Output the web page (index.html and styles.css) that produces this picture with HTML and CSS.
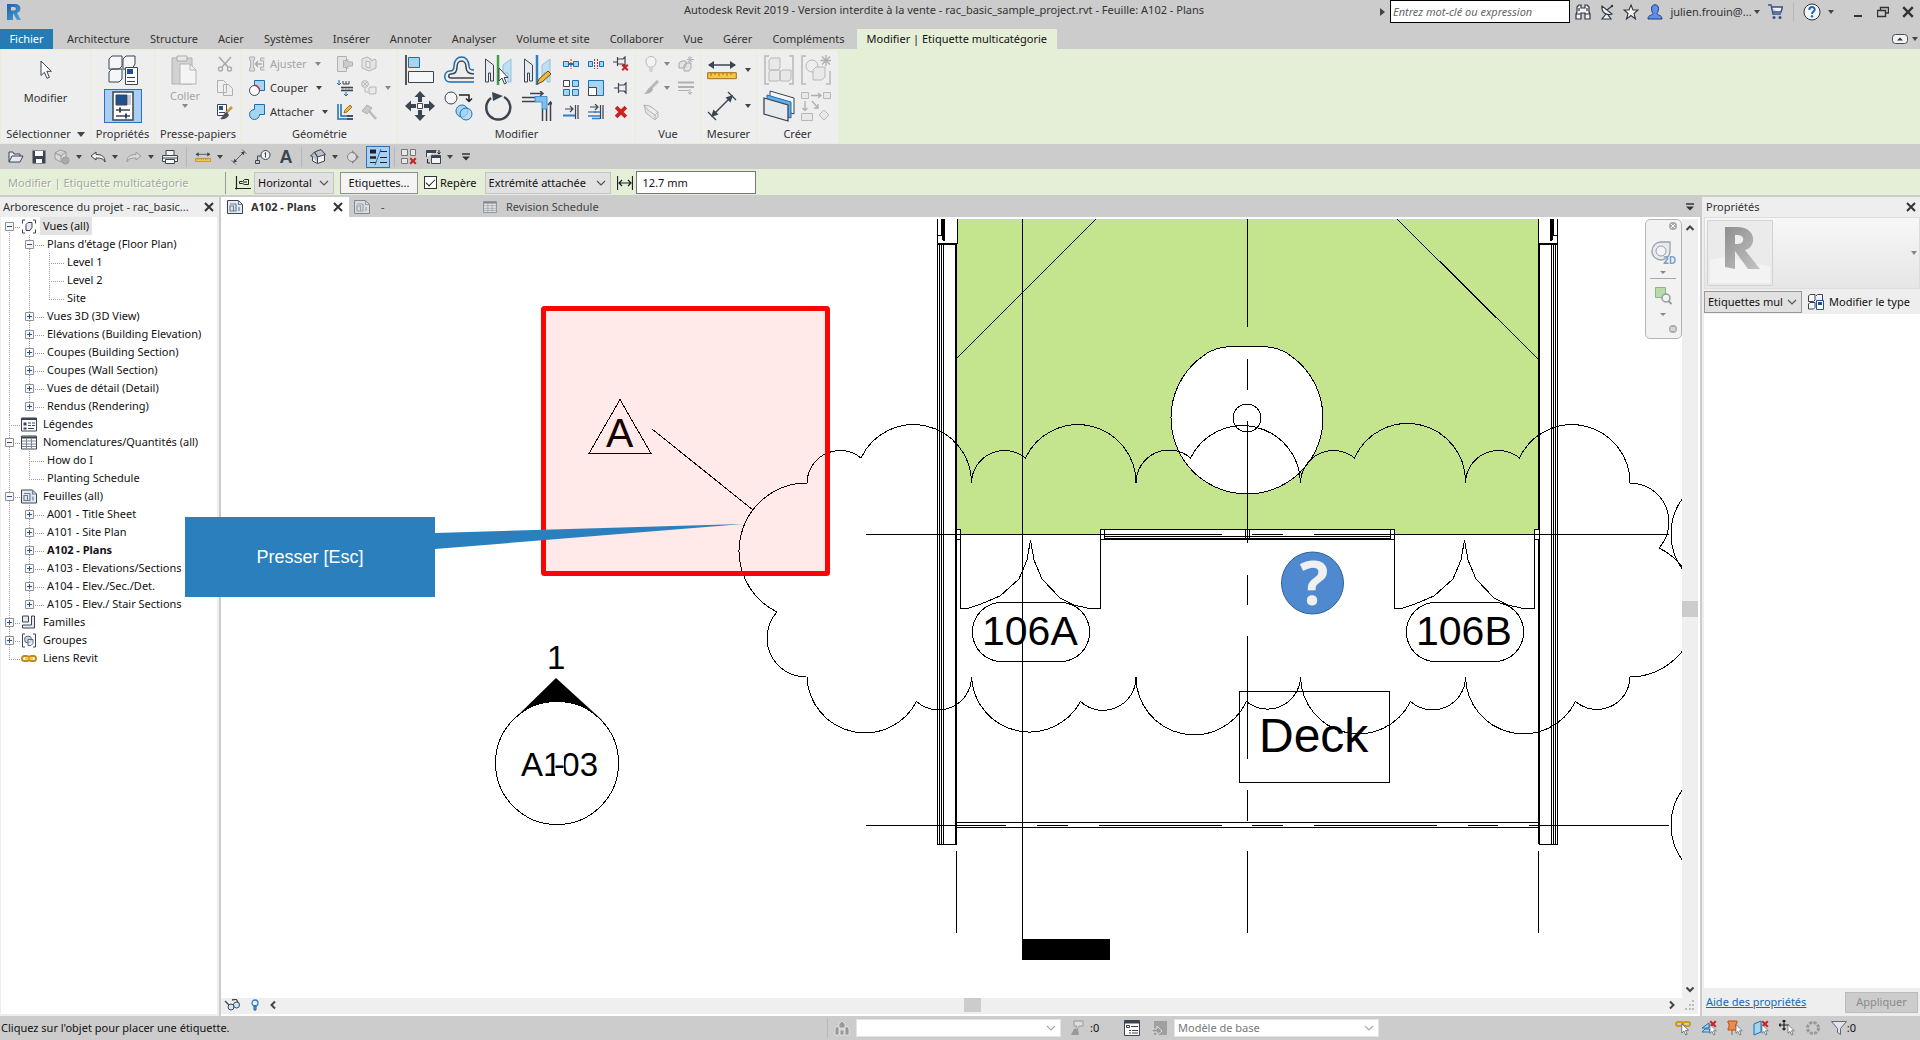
FILE: index.html
```html
<!DOCTYPE html>
<html lang="fr">
<head>
<meta charset="utf-8">
<title>Autodesk Revit 2019 - A102 - Plans</title>
<link rel="stylesheet" href="styles.css">
</head>
<body>
<svg class="defs" aria-hidden="true">
  <defs>
    <linearGradient id="rblue" x1="0" y1="0" x2="1" y2="1"><stop offset="0" stop-color="#1c5fa8"/><stop offset="1" stop-color="#4fa3d8"/></linearGradient>
    <linearGradient id="rgrey" x1="0" y1="0" x2="1" y2="1"><stop offset="0" stop-color="#8f8f8f"/><stop offset="1" stop-color="#c4c4c4"/></linearGradient>
    <symbol id="sheet" viewBox="0 0 16 14"><path d="M.5 .5h11l4 4v9H.5z" fill="#e6ebf2" stroke="#3b4450"/><path d="M11.500 .5v4h4M3 4h6M3 11V6h3.500v5zM9 4v7H6.500M12 7v4" fill="none" stroke="#6b7c94" stroke-width="1.200"/></symbol>
    <symbol id="table" viewBox="0 0 16 14"><path d="M.5 .5h15v13H.5z" fill="#fff" stroke="#3b4450"/><path d="M1 2h14" stroke="#3b4450" stroke-width="2"/><path d="M1 5.500h14M1 8.500h14M1 11h14M5.500 3v10M10.500 3v10" stroke="#7b8694"/></symbol>
    <symbol id="plus" viewBox="0 0 9 9"><path d="M.5 .5h8v8h-8z" fill="#f8f8f8" stroke="#919191"/><path d="M2 4.500h5M4.500 2v5" stroke="#2c4f8f"/></symbol>
    <symbol id="minus" viewBox="0 0 9 9"><path d="M.5 .5h8v8h-8z" fill="#f8f8f8" stroke="#919191"/><path d="M2 4.500h5" stroke="#2c4f8f"/></symbol>
    <symbol id="cursor" viewBox="0 0 12 20"><path d="M1 1v14.500l3.400-3.200 2.600 6 2.400-1-2.600-6h4.600z" fill="#fff" stroke="#3b4450"/></symbol>
    <symbol id="close" viewBox="0 0 10 10"><path d="M1 1l8 8M9 1L1 9" stroke="#333" stroke-width="2"/></symbol>
    <symbol id="chev" viewBox="0 0 10 6"><path d="M1 1l4 4 4-4" fill="none" stroke="currentColor" stroke-width="1.200"/></symbol>
    <symbol id="ruler" viewBox="0 0 30 20"><path d="M2 5h26" stroke="#3b4450" stroke-width="1.500"/><path d="M1 5l6-4v8zM29 5l-6-4v8z" fill="#3b4450"/><path d="M.7 12.700h28.600v6H.7z" fill="#f3c64c" stroke="#a86c11"/><path d="M4 13v3M8 13v2M12 13v3M16 13v2M20 13v3M24 13v2" stroke="#a86c11"/></symbol>
    <symbol id="dim" viewBox="0 0 30 30"><path d="M6 24L24 6" stroke="#3b4450" stroke-width="1.500"/><path d="M4 26l2.500-7.500 5 5zM26 4l-2.500 7.500-5-5z" fill="#3b4450"/><path d="M1 21l8 8M21 1l8 8" stroke="#3b4450" stroke-width="1.300"/></symbol>
    <symbol id="redx" viewBox="0 0 10 10"><path d="M1.500 1.500l7 7M8.500 1.500l-7 7" stroke="#c22" stroke-width="2.600"/></symbol>
    <symbol id="props" viewBox="0 0 22 30"><path d="M1 1h20v28H1z" fill="#fff" stroke="#3b4450" stroke-width="1.500"/><path d="M4 4h11v10H4z" fill="#1f528c" stroke="#3b4450"/><path d="M16 4h3v10h-3z" fill="#c9ccd2"/><path d="M4 19h14M4 25h14" stroke="#3b4450" stroke-width="1.500"/><path d="M8 16.500v5M14 22.500v5" stroke="#3b4450" stroke-width="2"/></symbol>
  </defs>
</svg>

<header class="titlebar">
  <svg class="logo" viewBox="0 0 16 18"><path d="M1 1h8c7 0 7 8 2 9l4 7h-4L7 10v7H1z" fill="url(#rblue)"/><path d="M5 4h3c2.500 0 2.500 3.500 0 3.500H5z" fill="#ccc"/></svg>
  <h1>Autodesk Revit 2019 - Version interdite à la vente - rac_basic_sample_project.rvt - Feuille: A102 - Plans</h1>
  <div class="tools">
    <span class="tri-right"></span>
    <input class="search" type="text" aria-label="Recherche" placeholder="Entrez mot-clé ou expression">
    <button class="tb" aria-label="Rechercher"><svg width="16" height="16" viewBox="0 0 16 16"><path d="M2 3l2-2h2v3h4V1h2l2 2v5l1 2v5h-5V9H6v6H1v-5l1-2zM1 10h5M10 10h5M4 4v3M12 4v3" fill="#f3f3f3" stroke="#2f3742" stroke-width="1.200"/></svg></button>
    <button class="tb" aria-label="Centre de communication"><svg width="16" height="16" viewBox="0 0 16 16"><path d="M3 2c-1 6 4 10 10 8zM8 6l5-4M7 10l-4 5h9l-3-4" fill="#f3f3f3" stroke="#2f3742" stroke-width="1.200"/><circle cx="13" cy="2" r="1.200" fill="#2f3742"/></svg></button>
    <button class="tb" aria-label="Favoris"><svg width="16" height="16" viewBox="0 0 16 16"><path d="M8 1l2 5h5l-4 3.500 1.500 5.500L8 11.500 3.500 15 5 9.500 1 6h5z" fill="#f3f3f3" stroke="#2f3742" stroke-width="1.100"/></svg></button>
    <button class="tb" aria-label="Compte"><svg width="16" height="16" viewBox="0 0 16 16"><path d="M4.500 4.500c0-5 7-5 7 0 0 3-1 4-1.500 5 0 2 5 1 5 5.500H1c0-4.500 5-3.500 5-5.500-.5-1-1.500-2-1.500-5z" fill="#5b8ff0" stroke="#253a66"/></svg></button>
    <button class="user">julien.frouin@...<span class="caret"></span></button>
    <button class="tb" aria-label="Boutique"><svg width="16" height="16" viewBox="0 0 16 16"><path d="M1 1h3l2 9h8M4.500 3h11L14 8H6" fill="#eef3fb" stroke="#33508a" stroke-width="1.400"/><circle cx="7" cy="13.500" r="1.500" fill="#33508a"/><circle cx="13" cy="13.500" r="1.500" fill="#33508a"/></svg></button>
    <span class="vsep"></span>
    <button class="tb" aria-label="Aide"><svg width="18" height="18" viewBox="0 0 18 18"><circle cx="9" cy="9" r="8" fill="#f4f8fd" stroke="#2f3742"/><path d="M6.300 7c0-4 5.600-3.600 5.400-.4C11.600 8.500 9 8.600 9 11" fill="none" stroke="#2166b8" stroke-width="2"/><circle cx="9" cy="13.300" r="1.200" fill="#2166b8"/></svg></button>
    <span class="caret"></span>
    <button class="win" aria-label="Réduire"><svg width="12" height="12" viewBox="0 0 12 12"><path d="M2 10h8" stroke="#333" stroke-width="2"/></svg></button>
    <button class="win" aria-label="Restaurer"><svg width="12" height="12" viewBox="0 0 12 12"><path d="M3.500 4V1.500h8V7H9M.5 4.500h8v6h-8z" fill="none" stroke="#333" stroke-width="1.400"/></svg></button>
    <button class="win" aria-label="Fermer"><svg width="12" height="12"><use href="#close"/></svg></button>
  </div>
</header>

<nav class="tabs">
  <a href="#" class="file">Fichier</a>
  <a href="#">Architecture</a><a href="#">Structure</a><a href="#">Acier</a><a href="#">Systèmes</a><a href="#">Insérer</a><a href="#">Annoter</a><a href="#">Analyser</a><a href="#">Volume et site</a><a href="#">Collaborer</a><a href="#">Vue</a><a href="#">Gérer</a><a href="#">Compléments</a>
  <a href="#" class="ctx">Modifier | Etiquette multicatégorie</a>
  <button class="collapse" aria-label="Réduire le ruban"><svg width="16" height="10" viewBox="0 0 16 10"><rect x=".5" y=".5" width="15" height="9" rx="3" fill="#f4f4f4" stroke="#444c57"/><path d="M5 6.500h6L8 3.500z" fill="#333"/></svg><span class="caret"></span></button>
</nav>

<section class="ribbon">
  <div class="panel">
    <div class="body one">
      <button class="big"><svg width="12" height="20"><use href="#cursor"/></svg><span>Modifier</span></button>
    </div>
    <h2>Sélectionner <span class="caret wide"></span></h2>
  </div>
  <div class="panel">
    <div class="body lg c1">
      <button aria-label="Propriétés du type"><svg width="30" height="30" viewBox="0 0 30 30"><path d="M1 4l3-3h10v10l-3 3H1zM15 4l3-3h9v8l-3 5h-9zM1 17l3-3h10v10l-3 3H1z" fill="#f5f6f8" stroke="#3b4450"/><path d="M17.500 12.500h12v17h-12z" fill="#fff" stroke="#3b4450"/><path d="M19 14h6v5h-6z" fill="#1f528c"/><path d="M19 22.500h8M19 26.500h8" stroke="#3b4450"/></svg></button>
      <button class="on" aria-label="Palette des propriétés"><svg width="22" height="30"><use href="#props"/></svg></button>
    </div>
    <h2>Propriétés</h2>
  </div>
  <div class="panel">
    <div class="body clip">
      <button class="big off"><svg width="28" height="30" viewBox="0 0 28 30"><path d="M1 3h20v26H1z" fill="#d2d2d2" stroke="#b0b0b0"/><path d="M6 1h10v5H6z" fill="#e8e8e8" stroke="#aaa"/><path d="M9 9h10l6 6v14H9z" fill="#f4f4f4" stroke="#b5b5b5"/><path d="M19 9v6h6" fill="none" stroke="#b5b5b5"/></svg><span>Coller</span><span class="caret"></span></button>
      <div class="sm">
        <button aria-label="Couper"><svg width="16" height="16" viewBox="0 0 16 16"><path d="M2 1l9 10M14 1L5 11" stroke="#aaa" stroke-width="1.600"/><circle cx="3.500" cy="13" r="2" fill="none" stroke="#aaa" stroke-width="1.400"/><circle cx="12.500" cy="13" r="2" fill="none" stroke="#aaa" stroke-width="1.400"/></svg></button>
        <button aria-label="Copier"><svg width="16" height="16" viewBox="0 0 16 16"><path d="M.5 .5h6l3 3v9h-9zM6.500 4.500h5l4 4v7h-9z" fill="#efefef" stroke="#b0b0b0"/></svg></button>
        <button aria-label="Copier les propriétés"><svg width="16" height="16" viewBox="0 0 16 16"><path d="M.5 .5h9v11h-9z" fill="#fff" stroke="#3b4450"/><path d="M2 2h4v4H2z" fill="#1f528c"/><path d="M2 8.500h6" stroke="#3b4450"/><path d="M15 3L9 9" stroke="#c99a3c" stroke-width="2.500"/><path d="M10 8l2 3c-2 4-6 5-9 4 3-2 3-6 7-7z" fill="#4a525e"/></svg></button>
      </div>
    </div>
    <h2>Presse-papiers</h2>
  </div>
  <div class="panel">
    <div class="body geo">
      <div class="sm left">
        <button class="off"><svg width="16" height="16" viewBox="0 0 16 16"><path d="M.5 1h5v3h-1v8h1v3h-5v-3h1V4h-1zM15.500 2h-4v3h3v6h-3v3h4" fill="#ddd" stroke="#b0b0b0"/><path d="M13 8H7m2-3L6.500 8 9 11" fill="none" stroke="#a5a5a5" stroke-width="1.300"/></svg>Ajuster<span class="caret"></span></button>
        <button><svg width="16" height="16" viewBox="0 0 16 16"><path d="M5.500 .5h10v10h-10z" fill="#a6d5ef" stroke="#1b6fb5"/><circle cx="5.500" cy="10.500" r="5" fill="#fff" stroke="#3b4450"/><path d="M5 5.500a5 5 0 0 1 5.500 5" fill="none" stroke="#c22" stroke-width="1.300"/></svg>Couper<span class="caret"></span></button>
        <button><svg width="16" height="16" viewBox="0 0 16 16"><path d="M5.500 .5h10v10h-5a5 5 0 1 1-5-5z" fill="#a6d5ef" stroke="#1b6fb5"/></svg>Attacher<span class="caret"></span></button>
      </div>
      <div class="sm">
        <button aria-label="Ajuster face"><svg width="16" height="16" viewBox="0 0 16 16"><path d="M.5 .5h9v4h-3v7h3v4h-9z" fill="#e4e4e4" stroke="#b0b0b0"/><path d="M15.500 6v4H11v2.500L6 8l5-4.500V6z" fill="#d0d0d0" stroke="#b0b0b0"/></svg></button>
        <button aria-label="Joints de poutre"><svg width="16" height="16" viewBox="0 0 16 16"><path d="M2 0v5M0 3l2 2 2-2M9 16v-4M7 14l2 2 2-2" fill="none" stroke="#1b6fb5"/><path d="M6 1v3h6V1M9 1v3" fill="none" stroke="#3b4450"/><path d="M4 7.500h12M4 10.500h12" stroke="#3b4450" stroke-width="1.300"/><path d="M5 9h11" stroke="#888" stroke-dasharray="2 1"/></svg></button>
        <button aria-label="Joints de mur"><svg width="16" height="16" viewBox="0 0 16 16"><path d="M1 0v15h15M4 0v12h12" fill="none" stroke="#1b6fb5" stroke-width="1.500"/><path d="M10 15h6M10 12h6" stroke="#3b4450" stroke-width="1.500"/><path d="M7 9l1-3 5-5 2 2-5 5z" fill="#f0b93a" stroke="#8b5a12" stroke-width=".8"/></svg></button>
      </div>
      <div class="sm left">
        <button aria-label="Scinder face"><svg width="16" height="16" viewBox="0 0 16 16"><path d="M1 3l5-2 4 2v2l4-2 1 1v8l-7 3-7-3zM5 5v6l4 1V6z" fill="#e4e4e4" stroke="#b5b5b5"/></svg></button>
        <button aria-label="Peindre"><svg width="16" height="16" viewBox="0 0 16 16"><circle cx="4" cy="4" r="3.400" fill="#e8e8e8" stroke="#b5b5b5"/><path d="M2 2l4 4M6 2L2 6M4 8v4h3" fill="none" stroke="#b5b5b5"/><path d="M8 8l1-1h6v6l-1 1H8z" fill="#e8e8e8" stroke="#b5b5b5"/></svg><span class="caret soft"></span></button>
        <button aria-label="Démolir"><svg width="16" height="16" viewBox="0 0 16 16"><path d="M1 7l5-6 5 3-5 6z" fill="#c9c9c9" stroke="#b0b0b0"/><path d="M8 7l7 8" stroke="#bbb" stroke-width="2.500"/></svg></button>
      </div>
    </div>
    <h2>Géométrie</h2>
  </div>
  <div class="panel">
    <div class="body mod">
      <div class="lg c4">
        <button aria-label="Aligner"><svg width="30" height="30" viewBox="0 0 30 30"><path d="M1 0v30" stroke="#222" stroke-width="1.500"/><path d="M3.500 2.500h11v10h-11z" fill="#a6d5ef" stroke="#1b6fb5"/><path d="M3.500 16.500h25v11h-25z" fill="#f5f6f8" stroke="#3b4450"/></svg></button>
        <button aria-label="Décaler"><svg width="30" height="30" viewBox="0 0 30 30"><path d="M30 27H6c-7 0-7-11 0-11 3 0 4-2 4-5 0-12 15-12 15 0 0 3 1 4 5 4" fill="none" stroke="#1b6fb5" stroke-width="1.500"/><path d="M30 23H7c-3 0-3-4 0-4 4 0 6-3 6-7 0-8 9-8 9 0 0 4 2 7 8 7" fill="none" stroke="#3b4450" stroke-width="1.500"/></svg></button>
        <button aria-label="Symétrie - Choisir l'axe"><svg width="28" height="30" viewBox="0 0 28 30"><path d="M1.500 4l8 6v16h-3V18h-2v9h-3z" fill="#e6e9ee" stroke="#3b4450"/><path d="M27 4l-8 6v16h2V18h3v9h3z" fill="#bfe0f2" stroke="#8fc0de"/><path d="M14 0v30" stroke="#43a047" stroke-width="2.500"/><path d="M15 13v13l3-3 2.500 6 2-1-2.500-5.500h4z" fill="#fff" stroke="#3b4450"/></svg></button>
        <button aria-label="Symétrie - Dessiner l'axe"><svg width="28" height="30" viewBox="0 0 28 30"><path d="M1.500 4l8 6v16h-3V18h-2v9h-3z" fill="#e6e9ee" stroke="#3b4450"/><path d="M27 4l-8 6v16h2V18h3v9h3z" fill="#bfe0f2" stroke="#8fc0de"/><path d="M14 0v30" stroke="#2b7fd0" stroke-width="2.500"/><path d="M14 29l2-5 9-8 3 3-9 8z" fill="#f0b93a" stroke="#6d4a12"/></svg></button>
        <button aria-label="Déplacer"><svg width="30" height="30" viewBox="0 0 30 30"><path d="M15 0l5.500 6H17v5h-4V6H9.500zM15 30l5.500-6H17v-5h-4v5H9.500zM0 15l6-5.500V13h5v4H6v3.500zM30 15l-6-5.500V13h-5v4h5v3.500z" fill="#3b4450"/><path d="M12.500 12.500h5v5h-5z" fill="#fff" stroke="#3b4450"/></svg></button>
        <button aria-label="Copier"><svg width="30" height="30" viewBox="0 0 30 30"><circle cx="7" cy="7" r="6" fill="#f5f6f8" stroke="#3b4450"/><path d="M15 4h10v6M22 7.500l3 3 3-3" fill="none" stroke="#222" stroke-width="1.500"/><circle cx="18" cy="20" r="6" fill="#a6d5ef" stroke="#1b6fb5"/><circle cx="22" cy="23" r="6" fill="#a6d5ef" fill-opacity=".7" stroke="#1b6fb5"/></svg></button>
        <button aria-label="Rotation"><svg width="28" height="30" viewBox="0 0 28 30"><path d="M7 7a12 12 0 1 0 13-1" fill="none" stroke="#3b4450" stroke-width="2.500"/><path d="M8 1l11 4-10 5z" fill="#3b4450"/></svg></button>
        <button aria-label="Ajuster/Prolonger"><svg width="30" height="30" viewBox="0 0 30 30"><path d="M8 2.500h12M18 0l3 2.500L18 5M28.500 30V12M26 14l2.500-3 2.500 3M0 6.500h13M0 10.500h13M20.500 30V17M24.500 30V17" fill="none" stroke="#3b4450" stroke-width="1.500"/><path d="M13 5.500h12V18h-5v-7h-7z" fill="#7fc0ea" stroke="#2b7fd0" stroke-width=".8"/></svg></button>
      </div>
      <div class="sm c3">
        <button aria-label="Scinder"><svg width="16" height="16" viewBox="0 0 16 16"><path d="M.5 5.500h5v5h-5zM10.500 5.500h5v5h-5z" fill="#a6d5ef" stroke="#1b6fb5"/><path d="M5 8h6" stroke="#1b6fb5" stroke-width="2"/><path d="M8 3v10" stroke="#c22" stroke-dasharray="2 1"/></svg></button>
        <button aria-label="Scinder avec écart"><svg width="16" height="16" viewBox="0 0 16 16"><path d="M.5 5.500h4v5h-4zM11.500 5.500h4v5h-4z" fill="#a6d5ef" stroke="#1b6fb5"/><path d="M6.500 3v10M9.500 3v10" stroke="#c22" stroke-dasharray="2 1"/></svg></button>
        <button aria-label="Déverrouiller"><svg width="16" height="16" viewBox="0 0 16 16"><path d="M0 6h4M4.500 1v9M5 3h5l2-2v9l-2-2H5" fill="none" stroke="#3b4450" stroke-width="1.200"/><use href="#redx" x="8" y="7" width="8" height="9"/></svg></button>
        <button aria-label="Réseau"><svg width="16" height="16" viewBox="0 0 16 16"><path d="M.5 .5h6v6h-6z" fill="#fff" stroke="#3b4450"/><path d="M9.500 .5h6v6h-6zM.5 9.500h6v6h-6zM9.500 9.500h6v6h-6z" fill="#a6d5ef" stroke="#1b6fb5"/></svg></button>
        <button aria-label="Echelle"><svg width="16" height="16" viewBox="0 0 16 16"><path d="M.5 .5h15v15H.5z" fill="#a6d5ef" stroke="#1b6fb5"/><path d="M.5 7.500h8v8h-8z" fill="#fff" stroke="#3b4450"/></svg></button>
        <button aria-label="Verrouiller"><svg width="16" height="16" viewBox="0 0 16 16"><path d="M1 8h4M5.500 3v10M6 5h5l2-2v10l-2-2H6" fill="none" stroke="#3b4450" stroke-width="1.200"/></svg></button>
        <button aria-label="Ajuster un élément"><svg width="16" height="16" viewBox="0 0 16 16"><path d="M2 5h7M7 2l3 3-3 3M12.500 1v14M15 1v14" fill="none" stroke="#3b4450" stroke-width="1.200"/><path d="M0 11.500h12" stroke="#2b7fd0" stroke-width="2"/></svg></button>
        <button aria-label="Ajuster plusieurs éléments"><svg width="16" height="16" viewBox="0 0 16 16"><path d="M2 3h7M7 0l3 3-3 3M0 8h8M12.500 1v14M15 1v14" fill="none" stroke="#3b4450" stroke-width="1.200"/><path d="M6 8h6M0 12h12M4 14.500h8" stroke="#2b7fd0" stroke-width="1.600"/></svg></button>
        <button aria-label="Supprimer"><svg width="14" height="14"><use href="#redx"/></svg></button>
      </div>
    </div>
    <h2>Modifier</h2>
  </div>
  <div class="panel">
    <div class="body vue">
      <div class="sm left">
        <button aria-label="Masquer"><svg width="16" height="16" viewBox="0 0 16 16"><path d="M5.500 11C1 6 3 .5 8 .5S15 6 10.500 11zM6 13h4M6.500 15h3" fill="#f3f3f3" stroke="#b8b8b8"/></svg><span class="caret"></span></button>
        <button aria-label="Remplacer"><svg width="16" height="16" viewBox="0 0 16 16"><path d="M15 1L8 8" stroke="#b8b8b8" stroke-width="3"/><path d="M8 7l2 2c-1 4-5 5-9 5 3-2 3-6 7-7z" fill="#b0b0b0"/></svg><span class="caret"></span></button>
        <button aria-label="Zone de coupe"><svg width="16" height="16" viewBox="0 0 16 16"><path d="M1 1l6 1 8 6v5l-3 3-9-7zM1 1l4 5 7 5 3-3M12 11v5" fill="#e4e4e4" stroke="#b5b5b5"/></svg></button>
      </div>
      <div class="sm">
        <button aria-label="Afficher"><svg width="16" height="16" viewBox="0 0 16 16"><path d="M1 7l3-2h4v5l-2 2H1zM6 9l3-2h4v5l-2 3H6z" fill="#e4e4e4" stroke="#a8a8a8"/><path d="M12 0v7M9 3.500h7M10 1l4 5M14 1l-4 5" stroke="#b5b5b5"/></svg></button>
        <button aria-label="Epaisseur"><svg width="16" height="16" viewBox="0 0 16 16"><path d="M0 2.500h16M0 7h16" stroke="#b0b0b0" stroke-width="2"/><path d="M0 10.500h11M12 9v5M10 12l2 2.500 2-2.500" fill="none" stroke="#b0b0b0"/></svg></button>
      </div>
    </div>
    <h2>Vue</h2>
  </div>
  <div class="panel">
    <div class="body lg c1">
      <button aria-label="Mesurer"><svg width="30" height="20"><use href="#ruler"/></svg><span class="caret"></span></button>
      <button aria-label="Cote alignée"><svg width="30" height="30"><use href="#dim"/></svg><span class="caret"></span></button>
    </div>
    <h2>Mesurer</h2>
  </div>
  <div class="panel">
    <div class="body lg c2">
      <button aria-label="Créer un assemblage"><svg width="30" height="30" viewBox="0 0 30 30"><path d="M5 1H1v28h4M25 1h4v28h-4" fill="none" stroke="#b8b8b8" stroke-width="1.500"/><path d="M5 5l2-2h9v10l-2 2H5zM5 17l2-2h9v9l-2 2H5zM16 17l2-2h9v9l-2 2h-9z" fill="#e8e8e8" stroke="#b8b8b8"/></svg></button>
      <button aria-label="Créer un groupe"><svg width="30" height="30" viewBox="0 0 30 30"><path d="M5 1H1v28h4M25 29h4V16" fill="none" stroke="#b8b8b8" stroke-width="1.500"/><circle cx="11" cy="11" r="6" fill="#eee" stroke="#b8b8b8"/><path d="M12 15l3-3h9v10l-3 3h-9z" fill="#e8e8e8" stroke="#b8b8b8"/><path d="M25 0v11M19.500 5.500H31M21 1.500l8 8M29 1.500l-8 8" stroke="#b0b0b0" stroke-width="1.300"/></svg></button>
      <button aria-label="Créer des éléments similaires"><svg width="32" height="32" viewBox="0 0 32 32"><path d="M7 1l24 7v16L7 16z" fill="#f5f6f8" stroke="#3b4450"/><path d="M4 5l24 7v16L4 20z" fill="#5fb0ea" stroke="#1b6fb5"/><path d="M1 8l24 7v16L1 24z" fill="#e6e9ee" stroke="#3b4450" stroke-width="1.300"/></svg></button>
      <button aria-label="Créer des pièces"><svg width="30" height="30" viewBox="0 0 30 30"><path d="M.5 1.500h7v6h-7zM22.500 1.500h7v6h-7zM.5 22.500h11v7H.5zM23 19l5 5-5 5-5-5z" fill="#e8e8e8" stroke="#b8b8b8"/><path d="M10 4.500h9M17 2l3 2.500L17 7M4 10v9M1.500 17L4 19.500 6.500 17M11 10l6 7M17 13v4h-4" fill="none" stroke="#b0b0b0" stroke-width="1.300"/></svg></button>
    </div>
    <h2>Créer</h2>
  </div>
</section>

<div class="qat">
  <button aria-label="Ouvrir"><svg width="16" height="12" viewBox="0 0 16 12"><path d="M1 11V1h4l1 2h6v2M1 11l3-6h11l-3 6z" fill="#e6e9ee" stroke="#3b4450"/></svg></button>
  <button aria-label="Enregistrer"><svg width="14" height="14" viewBox="0 0 14 14"><path d="M.5 .5h13v13H.5z" fill="#3b4450"/><path d="M3 1h8v5H3zM4 9h6v4H4z" fill="#fff"/></svg></button>
  <button class="pair" aria-label="Synchroniser"><svg width="16" height="16" viewBox="0 0 16 16"><path d="M1 4l5-3 6 2v7l-5 3-6-3zM1 4l6 3 5-4M7 7v6" fill="#d9d9d9" stroke="#9a9a9a"/><circle cx="11.500" cy="11.500" r="3.500" fill="#aaa" stroke="#999"/></svg><span class="caret"></span></button>
  <button class="pair" aria-label="Annuler"><svg width="16" height="12" viewBox="0 0 16 12"><path d="M1 5l5-4v2.500c6 0 9 2 9 7.500-1-3-4-4-9-4V9z" fill="#f3f3f3" stroke="#3b4450"/></svg><span class="caret"></span></button>
  <button class="pair" aria-label="Rétablir"><svg width="16" height="12" viewBox="0 0 16 12"><path d="M15 5l-5-4v2.500c-6 0-9 2-9 7.500 1-3 4-4 9-4V9z" fill="#d9d9d9" stroke="#9a9a9a"/></svg><span class="caret"></span></button>
  <button aria-label="Imprimer"><svg width="16" height="14" viewBox="0 0 16 14"><path d="M4 5V.5h8V5M.5 5.500h15v6H.5z" fill="#f3f3f3" stroke="#3b4450"/><path d="M3.500 9.500h9v4h-9z" fill="#fff" stroke="#3b4450"/><path d="M1 8h14" stroke="#3b4450"/></svg></button>
  <span class="vsep"></span>
  <button class="pair" aria-label="Mesurer"><svg width="16" height="12" viewBox="0 0 30 20"><use href="#ruler"/></svg><span class="caret"></span></button>
  <button aria-label="Cote"><svg width="16" height="16"><use href="#dim"/></svg></button>
  <button aria-label="Etiquette"><svg width="16" height="14" viewBox="0 0 16 14"><circle cx="10.500" cy="5" r="4.500" fill="#f3f3f3" stroke="#3b4450"/><path d="M10.500 2.500v5M9.500 3.500l1-1M6 6H2.500v5M.5 10.500h4v3h-4z" fill="none" stroke="#3b4450"/></svg></button>
  <button class="txt" aria-label="Texte">A</button>
  <span class="vsep"></span>
  <button class="pair" aria-label="Vue 3D"><svg width="16" height="15" viewBox="0 0 16 15"><path d="M2.500 7v5l5 2.500L14.500 12V6" fill="#f3f3f3" stroke="#3b4450"/><path d="M7.500 14V8l-3-5-4 4 2 .5M4.500 3L11 .5l4.500 5-8 2.500z" fill="#b9bec7" stroke="#3b4450"/></svg><span class="caret"></span></button>
  <button aria-label="Coupe"><svg width="14" height="14" viewBox="0 0 14 14"><circle cx="6" cy="7" r="4.500" fill="#ddd" stroke="#888"/><path d="M6 0l7 7-7 7V11a4 4 0 0 0 0-8z" fill="#888"/></svg></button>
  <button class="on" aria-label="Lignes fines"><svg width="18" height="16" viewBox="0 0 18 16"><path d="M1 2.500h6" stroke="#222" stroke-width="4"/><path d="M1 8.500h6" stroke="#222" stroke-width="2.500"/><path d="M1 13.500h6M11 2.500h7M11 8.500h7M11 13.500h7" stroke="#222"/><path d="M12 0L6 16" stroke="#1b6fb5"/></svg></button>
  <span class="vsep tight"></span>
  <button aria-label="Fermer les vues inactives"><svg width="16" height="16" viewBox="0 0 16 16"><path d="M.5 .5h6v6h-6zM9.500 .5h5v6h-5zM.5 9.500h6v5h-6z" fill="#e8e8e8" stroke="#777"/><use href="#redx" x="8" y="8" width="8" height="8"/></svg></button>
  <button class="pair" aria-label="Changer de fenêtre"><svg width="16" height="16" viewBox="0 0 16 16"><path d="M1.500 8V1.500h10M6.500 6.500h9v8h-9z" fill="#f3f3f3" stroke="#3b4450"/><path d="M1 3h10M7 8h8" stroke="#3b4450" stroke-width="2"/><path d="M14 1v4M12.500 3.500L14 5l1.500-1.500M2.500 10v4H5" fill="none" stroke="#222"/></svg><span class="caret"></span></button>
  <button aria-label="Personnaliser"><svg width="10" height="8" viewBox="0 0 10 8"><path d="M1 1h8" stroke="#333" stroke-width="1.500"/><path d="M1 3.500h8L5 7.500z" fill="#333"/></svg></button>
</div>

<form class="options">
  <span class="hint">Modifier | Etiquette multicatégorie</span>
  <span class="bar"></span>
  <svg width="16" height="14" viewBox="0 0 16 14"><path d="M1.500 0v12.500H16M0 12.500h3M1.500 13.500v-2" fill="none" stroke="#222" stroke-width="1.200"/><path d="M4.500 5.500h3l2-2h4v5h-4l-2-1h-3zM8 6h4" fill="none" stroke="#222"/></svg>
  <span class="sel w-orient"><select aria-label="Orientation"><option>Horizontal</option></select><svg width="10" height="6"><use href="#chev"/></svg></span>
  <button type="button" class="push">Etiquettes...</button>
  <label class="check"><input type="checkbox" checked>Repère</label>
  <span class="sel w-end"><select aria-label="Extrémité du repère"><option>Extrémité attachée</option></select><svg width="10" height="6"><use href="#chev"/></svg></span>
  <svg width="16" height="14" viewBox="0 0 16 14"><path d="M.5 0v14M15.500 0v14M2 7h12M5 4L2 7l3 3M11 4l3 3-3 3" fill="none" stroke="#222" stroke-width="1.200"/></svg>
  <input class="len" type="text" aria-label="Longueur du repère" value="12.7 mm">
</form>

<main>
  <aside class="browser">
    <header><span>Arborescence du projet - rac_basic...</span><button aria-label="Fermer"><svg width="10" height="10"><use href="#close"/></svg></button></header>
    <ul class="tree">
      <li>
        <div class="row"><span class="node"><button aria-label="Réduire"><svg><use href="#minus"/></svg></button></span><svg class="ic" viewBox="0 0 16 14"><path d="M4 .5H1.500V4M12 .5h2.500V4M4 13.500H1.500V10M12 13.500h2.500V10" fill="none" stroke="#3b4450"/><path d="M5 5l2-2h4v5l-2 3H5z" fill="#e6e9ee" stroke="#3b4450"/></svg><span class="lab cur">Vues (all)</span></div>
        <ul>
          <li>
            <div class="row"><span class="node"><button aria-label="Réduire"><svg><use href="#minus"/></svg></button></span><span class="lab">Plans d'étage (Floor Plan)</span></div>
            <ul>
              <li><div class="row"><span class="node"></span><span class="lab">Level 1</span></div></li>
              <li><div class="row"><span class="node"></span><span class="lab">Level 2</span></div></li>
              <li><div class="row"><span class="node"></span><span class="lab">Site</span></div></li>
            </ul>
          </li>
          <li><div class="row"><span class="node"><button aria-label="Développer"><svg><use href="#plus"/></svg></button></span><span class="lab">Vues 3D (3D View)</span></div></li>
          <li><div class="row"><span class="node"><button aria-label="Développer"><svg><use href="#plus"/></svg></button></span><span class="lab">Elévations (Building Elevation)</span></div></li>
          <li><div class="row"><span class="node"><button aria-label="Développer"><svg><use href="#plus"/></svg></button></span><span class="lab">Coupes (Building Section)</span></div></li>
          <li><div class="row"><span class="node"><button aria-label="Développer"><svg><use href="#plus"/></svg></button></span><span class="lab">Coupes (Wall Section)</span></div></li>
          <li><div class="row"><span class="node"><button aria-label="Développer"><svg><use href="#plus"/></svg></button></span><span class="lab">Vues de détail (Detail)</span></div></li>
          <li><div class="row"><span class="node"><button aria-label="Développer"><svg><use href="#plus"/></svg></button></span><span class="lab">Rendus (Rendering)</span></div></li>
        </ul>
      </li>
      <li><div class="row"><span class="node"></span><svg class="ic" viewBox="0 0 16 14"><path d="M.5 .5h15v13H.5z" fill="#fff" stroke="#3b4450"/><path d="M1 1.500h14" stroke="#3b4450" stroke-width="2"/><path d="M2.500 5h3v3h-3zM2.500 10h3v2h-3z" fill="#3b4450"/><path d="M7 5.500h3M11 5.500h3M7 8h3M11 8h3M7 11h6" stroke="#3b4450"/></svg><span class="lab">Légendes</span></div></li>
      <li>
        <div class="row"><span class="node"><button aria-label="Réduire"><svg><use href="#minus"/></svg></button></span><svg class="ic"><use href="#table"/></svg><span class="lab">Nomenclatures/Quantités (all)</span></div>
        <ul>
          <li><div class="row"><span class="node"></span><span class="lab">How do I</span></div></li>
          <li><div class="row"><span class="node"></span><span class="lab">Planting Schedule</span></div></li>
        </ul>
      </li>
      <li>
        <div class="row"><span class="node"><button aria-label="Réduire"><svg><use href="#minus"/></svg></button></span><svg class="ic"><use href="#sheet"/></svg><span class="lab">Feuilles (all)</span></div>
        <ul>
          <li><div class="row"><span class="node"><button aria-label="Développer"><svg><use href="#plus"/></svg></button></span><span class="lab">A001 - Title Sheet</span></div></li>
          <li><div class="row"><span class="node"><button aria-label="Développer"><svg><use href="#plus"/></svg></button></span><span class="lab">A101 - Site Plan</span></div></li>
          <li><div class="row"><span class="node"><button aria-label="Développer"><svg><use href="#plus"/></svg></button></span><span class="lab open">A102 - Plans</span></div></li>
          <li><div class="row"><span class="node"><button aria-label="Développer"><svg><use href="#plus"/></svg></button></span><span class="lab">A103 - Elevations/Sections</span></div></li>
          <li><div class="row"><span class="node"><button aria-label="Développer"><svg><use href="#plus"/></svg></button></span><span class="lab">A104 - Elev./Sec./Det.</span></div></li>
          <li><div class="row"><span class="node"><button aria-label="Développer"><svg><use href="#plus"/></svg></button></span><span class="lab">A105 - Elev./ Stair Sections</span></div></li>
        </ul>
      </li>
      <li><div class="row"><span class="node"><button aria-label="Développer"><svg><use href="#plus"/></svg></button></span><svg class="ic" viewBox="0 0 16 14"><path d="M1.500 .5h6v6h-6zM10.500 .5h3v12h-12v-3h9z" fill="#e6e9ee" stroke="#3b4450"/></svg><span class="lab">Familles</span></div></li>
      <li><div class="row"><span class="node"><button aria-label="Développer"><svg><use href="#plus"/></svg></button></span><svg class="ic" viewBox="0 0 16 14"><path d="M4 .5H1.500v13H4M12 .5h2.500v13H12" fill="none" stroke="#3b4450"/><circle cx="7" cy="6" r="3.500" fill="#ccd3dd" stroke="#5d6a7c"/><path d="M7 6h5v4l-2 2H7z" fill="#e6e9ee" fill-opacity=".7" stroke="#5d6a7c"/></svg><span class="lab">Groupes</span></div></li>
      <li><div class="row"><span class="node"></span><svg class="ic" viewBox="0 0 16 14"><rect x="1" y="4.500" width="7" height="5" rx="2.500" fill="none" stroke="#c28a10" stroke-width="2"/><rect x="8" y="4.500" width="7" height="5" rx="2.500" fill="none" stroke="#c28a10" stroke-width="2"/><path d="M4 7h8" stroke="#e8b838" stroke-width="2"/></svg><span class="lab">Liens Revit</span></div></li>
    </ul>
  </aside>

  <section class="view">
    <div class="doctabs">
      <div class="dt active"><svg width="16" height="14"><use href="#sheet"/></svg><a href="#">A102 - Plans</a><button aria-label="Fermer"><svg width="10" height="10"><use href="#close"/></svg></button></div>
      <div class="dt dim"><svg width="16" height="14"><use href="#sheet"/></svg><a href="#">-</a></div>
      <div class="dt dim"><svg width="16" height="12"><use href="#table"/></svg><a href="#">Revision Schedule</a></div>
      <button class="list" aria-label="Liste des vues"><svg width="10" height="8" viewBox="0 0 10 8"><path d="M1 1h8" stroke="#333" stroke-width="1.500"/><path d="M1 3.500h8L5 7.500z" fill="#333"/></svg></button>
    </div>
    <div class="stage">
      <div class="canvas">
        <svg class="drawing" viewBox="221 217 1461 781" preserveAspectRatio="xMinYMin slice">
          <path class="lawn" d="M957 219h582v315H957z"/>
          <path class="ln fillw" d="M1203 356C1214 347 1228 346 1247 346S1280 347 1291 356A76 76 0 1 1 1203 356z"/>
          <circle class="ln" cx="1247" cy="418" r="14"/>
          <g class="ln">
            <!-- roof lines and grid axes -->
            <path d="M1096 219L957 358M1397 219l142 141"/>
            <path d="M1022.500 219v720"/>
            <path d="M1247.500 219v108M1247.500 359v31M1247.500 421v122M1247.500 575v30M1247.500 636v123M1247.500 790v31M1247.500 851v82M956.500 851v82M1538.500 851v82"/>
            <path d="M866 825.500h140M1037 825.500h31M1099 825.500h123M1252 825.500h31M1314 825.500h123M1468 825.500h30M1529 825.500h140"/>
            <path d="M957 822.500h582M957 827.500h582"/>
            <circle cx="1731" cy="534" r="60"/><circle cx="1731" cy="825" r="60"/>
            <!-- walls -->
            <path d="M937.500 219v625h19M939.500 244v600M941.500 244v600M943.500 244v600M937.500 235h5v5M957.500 219v25"/>
            <path d="M1557.500 219v625h-19M1555.500 244v600M1553.500 244v600M1551.500 244v600M1557.500 235h-5v5M1538.500 219v25"/>
            <path class="th" d="M937 244h19v600M1558 244h-19v600M942 219v16M1553 219v16M944 219v22M1551 219v22"/>
            <!-- sliding door -->
            <path class="fillw" d="M1100.500 529.500h294v10h-294zM956.500 529.500h4v10h-4zM1534.500 529.500h5v10h-5z"/>
            <path d="M1104.500 529v10M1390.500 529v10M1245.500 529v10M1249.500 529v10M1104 536.500h287M1247.500 529v10"/>
            <path class="th" d="M1104 539h287"/>
            <path d="M866 534.500h356M1252 534.500h31M1314 534.500h355"/>
            <!-- swing doors -->
            <path d="M960.500 539v70L969 608 981 604 1000 596 1019 579 1027 560 1030.500 540 1034 560 1042 579 1060 598 1074 605 1087 608 1100.500 609v-70"/>
            <path d="M1394.500 539v70L1403 608 1415 604 1434 596 1453 579 1461 560 1464.500 540 1468 560 1476 579 1494 598 1508 605 1521 608 1534.500 609v-70"/>
            <rect x="972.500" y="602.500" width="117" height="59" rx="29"/><rect x="1406.500" y="602.500" width="117" height="59" rx="29"/>
            <rect x="1239.500" y="691.500" width="150" height="91"/>
          </g>
          <!-- revision cloud -->
          <path class="ln" d="M807 483A33 33 0 0 1 861 458A58 58 0 0 1 971.500 483A33 33 0 0 1 1025.500 458A58 58 0 0 1 1136 483A33 33 0 0 1 1190.500 458A58 58 0 0 1 1300.500 483A33 33 0 0 1 1354.500 458A58 58 0 0 1 1465.500 483A33 33 0 0 1 1519.500 458A58 58 0 0 1 1630 483A39 39 0 0 1 1659 548A68 68 0 0 1 1630 677A33 33 0 0 1 1575.500 701.500A58 58 0 0 1 1465.500 677A33 33 0 0 1 1410.500 701.500A58 58 0 0 1 1300.500 677A33 33 0 0 1 1246.500 701.500A58 58 0 0 1 1136 677A33 33 0 0 1 1080.500 701.500A58 58 0 0 1 971.500 677A33 33 0 0 1 916.500 701.500A58 58 0 0 1 807 677A39 39 0 0 1 777 612A68 68 0 0 1 807 483z"/>
          <path d="M1022 939h88v21h-88z"/>
          <!-- section head -->
          <path d="M556 678l46 42h-89z"/>
          <circle class="ln fillw" cx="557" cy="763" r="61.500"/>
          <g class="note">
            <text x="982" y="645" font-size="41">106A</text>
            <text x="1416" y="645" font-size="41">106B</text>
            <text x="1259" y="752" font-size="48">Deck</text>
            <text x="606" y="447" font-size="41">A</text>
            <text x="547" y="669" font-size="33">1</text>
            <text x="521" y="776" font-size="33">A103</text>
            <path d="M555 750h9v29h-9z" fill="#fff"/>
            <text x="554" y="776" font-size="33">-</text>
          </g>
          <path class="ln" d="M620 399.500l31 54h-62zM652 429l101 81"/>
          <circle cx="1312.500" cy="583" r="31" fill="#4f89cf" stroke="#31619c"/>
          <text x="1314" y="605" class="q">?</text>
          <rect x="543.500" y="308.500" width="284" height="265" rx="1" fill="#f00" fill-opacity=".085" stroke="#fb0404" stroke-width="5"/>
        </svg>
        <div class="navbar">
          <svg width="35" height="118" viewBox="0 0 35 118"><circle cx="27" cy="6" r="4" fill="#aaa"/><path d="M25 4l4 4M29 4l-4 4" stroke="#fff"/><path d="M15 22h9v9a9 9 0 1 1-9-9z" fill="#e8eaee" stroke="#9aa0aa" stroke-width="1.300"/><circle cx="15" cy="31" r="5" fill="#f3f3f3" stroke="#9aa0aa"/><path d="M14 51h6l-3 3z" fill="#888"/><path d="M4 58.500h26" stroke="#aaa"/><path d="M9.500 67.500h10v10h-10z" fill="#b9d9ac" stroke="#8db57e"/><circle cx="20" cy="78" r="4" fill="#eef3f8" stroke="#999" stroke-width="1.500"/><path d="M22.500 81l3 3" stroke="#999" stroke-width="2"/><path d="M14 93h6l-3 3z" fill="#888"/><circle cx="27" cy="109" r="4" fill="#aaa"/><path d="M24.500 108h5M24.500 110h5" stroke="#fff"/><text x="17" y="44">2D</text></svg>
        </div>
      </div>
      <div class="vscroll"><svg width="10" height="10" viewBox="0 0 10 10"><path d="M1.500 7L5 3.500 8.500 7" fill="none" stroke="#444" stroke-width="2"/></svg><i></i><svg width="10" height="10" viewBox="0 0 10 10"><path d="M1.500 3.500L5 7l3.500-3.500" fill="none" stroke="#444" stroke-width="2"/></svg></div>
    </div>
    <div class="hscroll">
      <button aria-label="Afficher"><svg width="16" height="12" viewBox="0 0 16 12"><path d="M1 2l4 4M8 1l4-1 3 5" fill="none" stroke="#3b4450" stroke-width="1.300"/><circle cx="7" cy="8" r="3" fill="#cfe8f5" stroke="#3b4450"/><circle cx="12.500" cy="6" r="3" fill="#cfe8f5" stroke="#3b4450"/></svg></button>
      <button aria-label="Masquer"><svg width="8" height="12" viewBox="0 0 8 12"><circle cx="4" cy="4" r="3" fill="#e6f3fb" stroke="#2b7fd0" stroke-width="1.300"/><path d="M3 7h2v4H3z" fill="#7fc0ea" stroke="#1f528c"/></svg></button>
      <svg width="8" height="10" viewBox="0 0 8 10"><path d="M6 1.500L2.500 5 6 8.500" fill="none" stroke="#444" stroke-width="2"/></svg>
      <span class="track"><i></i></span>
      <svg width="8" height="10" viewBox="0 0 8 10"><path d="M2 1.500L5.500 5 2 8.500" fill="none" stroke="#444" stroke-width="2"/></svg>
      <svg class="grip" width="10" height="10" viewBox="0 0 10 10"><path d="M7 0h2v2H7zM4 4h2v2H4zM7 4h2v2H7zM0 8h2v2H0zM4 8h2v2H4zM7 8h2v2H7z" fill="#bbb"/></svg>
    </div>
  </section>

  <aside class="properties">
    <header><span>Propriétés</span><button aria-label="Fermer"><svg width="10" height="10"><use href="#close"/></svg></button></header>
    <div class="typesel">
      <svg width="66" height="66" viewBox="0 0 66 66"><path d="M.5 .5h65v65H.5z" fill="#ebebeb" stroke="#d2d2d2"/><path d="M3 40l20-4 15 6 25 4v17H3z" fill="#f3f3f3"/><path d="M18 7h12c20 0 20 20 8 23l15 19H41L28 31v18l-10-2z" fill="url(#rgrey)"/><path d="M28 15h3c7 0 7 9 0 9h-3z" fill="#efefef"/></svg>
      <span class="caret soft"></span>
    </div>
    <div class="typerow">
      <span class="sel w-cat"><select aria-label="Catégorie"><option>Etiquettes mul</option></select><svg width="10" height="6"><use href="#chev"/></svg></span>
      <button class="edit"><svg width="16" height="16" viewBox="0 0 16 16"><path d="M.5 2l1.500-1.500h5V6L5.500 7.500h-5zM8 2L9.500 .5h5V6M.5 10L2 8.500h5v5L5.500 15h-5z" fill="#f5f6f8" stroke="#3b4450"/><path d="M8.500 6.500h7v9h-7z" fill="#fff" stroke="#1f528c"/><path d="M10 8h4v3h-4z" fill="#1f528c"/></svg>Modifier le type</button>
    </div>
    <div class="list"></div>
    <footer><a href="#">Aide des propriétés</a><button disabled>Appliquer</button></footer>
  </aside>
</main>

<footer class="status">
  <span class="msg">Cliquez sur l'objet pour placer une étiquette.</span>
  <div class="mid">
    <span class="vsep"></span>
    <svg width="16" height="16" viewBox="0 0 16 16"><path d="M5 4l3-3 3 3v4H5zM1 9l2-3 2 2v7H1zM11 8l2-2 2 3v6h-4zM6 10h4v5H6z" fill="#999" stroke="#eee" stroke-width=".7"/></svg>
    <span class="sel w-st"><select aria-label="Sous-projet actif" disabled><option></option></select><svg width="10" height="6"><use href="#chev"/></svg></span>
    <svg width="14" height="16" viewBox="0 0 14 16"><path d="M4 1h9v5H9l-2 4H5l2-4H4z" fill="#ddd" stroke="#999"/><path d="M1 15l3-6h4l1 6z" fill="#999"/></svg>
    <span class="cnt">:0</span>
    <svg width="16" height="16" viewBox="0 0 16 16"><path d="M.5 .5h15v15H.5z" fill="#fff" stroke="#3b4450"/><path d="M1 2h14" stroke="#3b4450" stroke-width="3"/><path d="M2.500 5.500h3v2h-3zM7 6.500h7M5 10.500h2M8 10.500h6M5 13h2M8 13h6" fill="none" stroke="#3b4450"/></svg>
    <svg width="16" height="16" viewBox="0 0 16 16"><path d="M2 1h13v14H2z" fill="#a0a0a0"/><path d="M0 9h5V6l5 5-5 4v-3H0z" fill="#999" stroke="#ddd"/></svg>
    <span class="sel w-st"><select aria-label="Variante" disabled><option>Modèle de base</option></select><svg width="10" height="6"><use href="#chev"/></svg></span>
  </div>
  <div class="end">
    <button aria-label="Sélection des liens"><svg width="16" height="16" viewBox="0 0 16 16"><rect x="1" y="2" width="7" height="4" rx="2" fill="none" stroke="#d09a1a" stroke-width="2"/><rect x="8" y="2" width="7" height="4" rx="2" fill="none" stroke="#d09a1a" stroke-width="2"/><use href="#cursor" x="6" y="3" width="8" height="13"/></svg></button>
    <button aria-label="Sélection des sous-couches"><svg width="16" height="16" viewBox="0 0 16 16"><path d="M1 8l7-5v5zM1 12h9l-2-3H4z" fill="#a6d5ef" stroke="#1b6fb5"/><use href="#redx" x="8" y="0" width="8" height="8"/><use href="#cursor" x="8" y="4" width="8" height="12"/></svg></button>
    <button aria-label="Sélection des éléments verrouillés"><svg width="16" height="16" viewBox="0 0 16 16"><path d="M1 1h9v2L9 4v3l2 2v1H1V9l1-2V4L1 3zM5 10v5" fill="#f08a4b" stroke="#b4501c"/><use href="#cursor" x="8" y="4" width="8" height="12"/></svg></button>
    <button aria-label="Sélection par face"><svg width="16" height="16" viewBox="0 0 16 16"><path d="M1 4l7-3v11l-7 3z" fill="#a6d5ef" stroke="#1b6fb5"/><use href="#redx" x="8" y="0" width="8" height="8"/><use href="#cursor" x="8" y="4" width="8" height="12"/></svg></button>
    <button aria-label="Glisser les éléments"><svg width="16" height="16" viewBox="0 0 16 16"><path d="M5 0v10M0 5h10M3.500 1.500L5 0l1.500 1.500M3.500 8.500L5 10l1.500-1.500M1.500 3.500L0 5l1.500 1.500" fill="none" stroke="#222" stroke-width="1.200"/><use href="#cursor" x="8" y="4" width="8" height="12"/></svg></button>
    <button aria-label="Processus"><svg width="16" height="16" viewBox="0 0 16 16"><circle cx="8" cy="8" r="5.500" fill="none" stroke="#999" stroke-width="3" stroke-dasharray="3 1.300"/></svg></button>
    <button class="flt" aria-label="Filtre"><svg width="16" height="16" viewBox="0 0 16 16"><path d="M.5 1.500h15l-6 7v6l-3-2v-4z" fill="#dfe3ea" stroke="#5d6a7c"/></svg>:0</button>
  </div>
</footer>

<div class="callout" role="note">
  <svg width="308" height="26" viewBox="0 0 308 26"><path d="M0 9L308 0 0 25z"/></svg>
  <p>Presser [Esc]</p>
</div>
</body>
</html>
```
FILE: styles.css
```css
* { box-sizing: border-box; }
html, body { height: 100%; }
body {
  margin: 0;
  min-height: 100vh;
  display: flex;
  flex-direction: column;
  position: relative;
  background: #ccc;
  color: #333;
  font: 11px/16px "Noto Sans", "Open Sans", sans-serif;
  overflow: hidden;
}
h1, h2, p, ul { margin: 0; padding: 0; font: inherit; list-style: none; }
a { color: inherit; text-decoration: none; }
svg { display: block; flex: none; }
button {
  display: flex;
  align-items: center;
  justify-content: center;
  margin: 0;
  padding: 0;
  border: 0;
  background: none;
  color: inherit;
  font: inherit;
}
input, select { font: inherit; color: #111; margin: 0; }
.defs { position: absolute; width: 0; height: 0; }

.caret {
  flex: none;
  border: 3px solid transparent;
  border-top: 4px solid #444;
  border-bottom: 0;
}
.caret.wide { border-width: 5px 4px 0; }
.caret.soft { border-top-color: #888; }
.vsep { width: 1px; height: 20px; background: #b8b8b8; flex: none; }

/* title bar */
.titlebar { display: flex; align-items: center; height: 29px; padding-left: 6px; }
.titlebar h1 { flex: 1; padding: 0 176px 10px 0; text-align: right; white-space: nowrap; }
.logo { width: 16px; height: 18px; margin-bottom: 6px; }
.tools { display: flex; align-items: center; margin-bottom: 6px; }
.tri-right { border: 4px solid transparent; border-left: 5px solid #444; border-right: 0; margin-right: 5px; }
.search { width: 180px; height: 23px; border: 1px solid #000; padding: 0 2px; background: #fff; margin-right: 1px; }
.search::placeholder { color: #666; font-style: italic; opacity: 1; }
.tb { width: 24px; height: 20px; }
.user { gap: 2px; width: 96px; }
.tools .tb + .vsep { margin: 0 6px; }
.tools > .caret { margin-right: 11px; margin-left: 4px; }
.win { width: 25px; }

/* ribbon tabs */
.tabs { display: flex; height: 20px; line-height: 20px; }
.tabs a { padding: 0 10px; white-space: nowrap; }
.tabs .file { width: 53px; padding: 0; text-align: center; background: #257bb3; color: #fff; margin-right: 4px; }
.tabs .ctx { background: #e5efd7; color: #111; margin-left: 2px; }
.collapse { margin-left: auto; padding-right: 2px; gap: 4px; }

/* ribbon panels */
.ribbon {
  display: grid;
  grid-template-columns: 89px 63px 86px 155px 237px 64px 55px 81px;
  gap: 1px;
  height: 95px;
  padding: 1px;
  background: #e5efd7;
}
.panel { background: #eee; display: flex; flex-direction: column; }
.panel h2 { display: flex; align-items: center; justify-content: center; gap: 6px; height: 18px; white-space: nowrap; }
.body { height: 75px; padding-top: 2px; }
.big { flex-direction: column; width: 100%; line-height: 16px; }
.big svg { height: 36px; }
.one .big svg { height: 20px; margin: 8px 0 10px; }
.off { color: #a5a5a5; }
.off .caret, .vue .caret { border-top-color: #888; }
.lg { display: grid; grid-auto-rows: 36px; justify-items: center; align-items: center; }
.lg button { gap: 8px; }
.c2 { grid-template-columns: 37px 37px; padding-left: 3px; }
.c4 { grid-template-columns: repeat(4, 39px); }
.sm { display: grid; grid-auto-rows: 24px; align-items: center; justify-items: center; }
.sm.left { justify-items: start; }
.sm button { gap: 8px; }
.c3 { grid-template-columns: repeat(3, 25px); }
.on { background: #aacff2; border: 1px solid #2a72bd; }
.lg .on { width: 38px; height: 34px; }
.clip { display: grid; grid-template-columns: 60px 20px; }
.clip .big { align-self: start; }
.geo { display: grid; grid-template-columns: 80px 16px 24px; column-gap: 8px; padding-left: 7px; }
.geo .left button svg { margin-right: -3px; }
.geo .left:last-child button svg { margin-right: 0; }
.mod { display: flex; gap: 2px; padding-left: 2px; }
.vue { display: grid; grid-template-columns: 35px 16px; padding-left: 7px; }
.vue .sm button { gap: 5px; }

/* quick access toolbar */
.qat { display: flex; align-items: center; gap: 8px; height: 25px; padding-left: 8px; }
.qat .pair { gap: 6px; }
.qat .on { width: 24px; height: 22px; margin-left: -2px; }
.qat .tight { margin: 0 -2px 0 -4px; }
.qat .txt { font: bold 18px/20px "Liberation Sans", sans-serif; color: #3b4450; width: 14px; }

/* options bar */
.options { display: flex; align-items: center; gap: 6px; height: 26px; padding: 1px 0 0 8px; background: #e5efd7; }
.hint { width: 211px; color: #a3a99b; text-shadow: 1px 1px 0 #fff; white-space: nowrap; }
.bar { width: 1px; height: 22px; background: #999; }
.options .bar + svg { margin: 0 -3px 0 3px; }
.sel { display: flex; align-items: center; height: 22px; background: #e1e1e1; border: 1px solid #c4c4c4; }
.sel select { appearance: none; flex: 1; min-width: 0; height: 100%; border: 0; background: none; padding: 0 2px 0 3px; border-radius: 0; opacity: 1; }
.sel svg { margin-right: 4px; color: #555; }
.w-orient { width: 80px; }
.w-end { width: 126px; margin-left: 2px; }
.push { width: 78px; height: 22px; background: #f4f4f4; border: 1px solid #8f8f8f; color: #111; }
.check { display: flex; align-items: center; gap: 3px; color: #111; }
.check input { appearance: none; width: 13px; height: 13px; border: 1px solid #333; background: #fff; display: grid; place-items: center; }
.check input:checked::before { content: ""; width: 8px; height: 4px; border: solid #222; border-width: 0 0 1px 1px; transform: rotate(-45deg); margin-top: -3px; }
.len { width: 120px; height: 23px; border: 1px solid #777; padding: 0 6px; background: #fff; margin-left: -3px; }

/* work area */
main { flex: 1; display: flex; gap: 2px; padding-top: 2px; min-height: 0; }
aside { background: #eee; display: flex; flex-direction: column; }
aside > header { display: flex; align-items: center; justify-content: space-between; height: 20px; padding: 0 4px 0 3px; white-space: nowrap; }
.browser { width: 219px; }
.browser > header { padding-right: 5px; }

.tree { flex: 1; margin: 0 2px 2px 1px; background: #fff; color: #111; overflow: hidden; }
.tree li {
  background: repeating-linear-gradient(#999 0 1px, transparent 1px 2px) 8px 9px / 1px 100% no-repeat;
}
.tree > li + li, .tree ul li { background-position: 8px 0; }
.tree > li:last-child, .tree ul li:last-child { background-size: 1px 10px; }
.tree ul { padding-left: 20px; }
.row { display: flex; align-items: center; height: 18px; white-space: nowrap; }
.node {
  display: flex;
  align-items: center;
  width: 20px;
  height: 18px;
  padding-left: 4px;
  background: repeating-linear-gradient(90deg, #999 0 1px, transparent 1px 2px) 8px 10px / 100% 1px no-repeat;
}
.tree ul .node { width: 23px; }
.node svg { width: 9px; height: 9px; }
.ic { width: 16px; height: 15px; margin-right: 3px; }
.lab { height: 18px; padding: 0 3px; line-height: 17px; }
.cur { background: #e3e3e3; }
.open { font-weight: bold; }

.view { flex: 1; display: flex; flex-direction: column; min-width: 0; background: #fff; padding-bottom: 2px; }
.doctabs { display: flex; height: 20px; background: #ccc; }
.dt { display: flex; align-items: center; gap: 8px; padding: 0 6px; width: 128px; color: #444; white-space: nowrap; }
.dt button { margin-left: auto; }
.dt.active { background: #fff; font-weight: bold; color: #333; }
.dt.dim { padding-left: 5px; }
.dt.dim svg { opacity: .5; }
.dt.dim a { padding-left: 3px; }
.dt.dim:nth-child(3) { width: 140px; }
.dt.dim:nth-child(3) a { padding: 0; }
.doctabs .list { margin-left: auto; padding-right: 5px; }
.stage { flex: 1; display: flex; min-height: 0; padding-right: 2px; }
.canvas { flex: 1; position: relative; min-width: 0; overflow: hidden; }
.drawing { width: 100%; height: 100%; }
.ln { fill: none; stroke: #000; stroke-width: 1; shape-rendering: crispEdges; }
.ln .fillw, .fillw { fill: #fff; }
.th { stroke-width: 2; }
.lawn { fill: #c4e58d; }
.note { font-family: "Liberation Sans", Arial, sans-serif; fill: #000; }
.q { font: bold 60px "Open Sans", sans-serif; fill: #f0f0f0; text-anchor: middle; }
.navbar { position: absolute; top: 2px; right: 0; border: 1px solid #b5b5b5; border-radius: 5px; background: #f2f2f2; }
.navbar text { font: bold 10px "Open Sans", sans-serif; fill: #7ba0c8; }
.vscroll { width: 16px; margin-top: 2px; padding: 4px 0; display: flex; flex-direction: column; align-items: center; justify-content: space-between; background: #efefef; }
.vscroll i { width: 16px; height: 16px; background: #ccc; }
.hscroll { display: flex; align-items: center; height: 16px; margin-right: 2px; padding: 0 3px 2px; background: #efefef; }
.hscroll button + button { margin: 0 10px 0 11px; }
.track { flex: 1; display: flex; justify-content: center; }
.track i { width: 17px; height: 14px; background: #ccc; }
.grip { margin-left: 9px; }

.properties { width: 218px; padding-left: 2px; }
.properties > header { padding-left: 2px; }
.typesel { display: flex; align-items: center; justify-content: space-between; height: 72px; padding: 0 2px; border: 1px solid #ddd; background: linear-gradient(#f7f7f7, #e6e6e6); }
.typerow { display: flex; align-items: center; gap: 6px; height: 25px; }
.w-cat { width: 98px; border-color: #999; }
.edit { gap: 5px; color: #111; }
.properties .list { flex: 1; background: #fff; }
.properties footer { display: flex; align-items: center; justify-content: space-between; height: 28px; padding: 0 2px; }
.properties footer a { color: #1569bd; text-decoration: underline; }
.properties footer button { width: 73px; height: 21px; background: #ccc; border: 1px solid #bbb; color: #8a8a8a; }

/* status bar */
.status { display: grid; grid-template-columns: 827px 1fr auto; align-items: center; height: 24px; color: #111; }
.msg { padding-left: 1px; }
.mid { display: flex; align-items: center; gap: 6px; }
.w-st { width: 205px; height: 18px; background: #fff; border-color: #e4e4e4; }
.mid .sel select { color: #777; }
.mid .sel svg { color: #aaa; }
.mid .sel + svg { margin-left: 3px; }
.cnt { width: 28px; }
.mid .cnt + svg + svg { margin-left: 6px; }
.end { display: flex; gap: 10px; padding-right: 64px; }

/* tutorial callout laid over the window */
.callout { position: absolute; left: 185px; top: 517px; width: 250px; height: 80px; display: grid; place-items: center; background: #2a7fbc; color: #fff; }
.callout p { font: 18px/24px "Liberation Sans", Arial, sans-serif; }
.callout svg { position: absolute; left: 100%; top: 7px; fill: #2a7fbc; }
```
